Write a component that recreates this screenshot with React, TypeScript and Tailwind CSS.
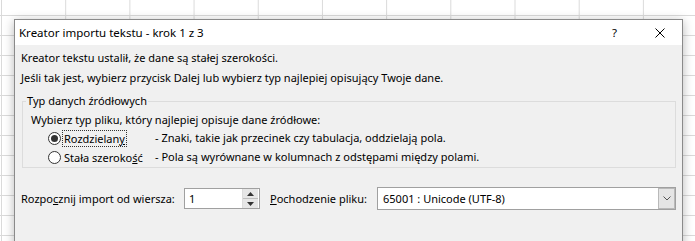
const F = { fontFamily: '"Noto Sans", "Open Sans", sans-serif' };

function Radio({ checked }: { checked?: boolean }) {
  return (
    <span className="w-[13px] h-[13px] rounded-full border border-[#333333] bg-white flex items-center justify-center shrink-0">
      {checked && <span className="w-[7px] h-[7px] rounded-full bg-[#333333]" />}
    </span>
  );
}

export default function App() {
  return (
    <div
      className="w-[695px] h-[241px] overflow-hidden bg-white bg-[linear-gradient(to_right,#dadada_1px,transparent_1px),linear-gradient(to_bottom,#dadada_1px,transparent_1px)] bg-[size:64.2px_20px] bg-[position:1px_15px] pt-[19px] pl-[14px] text-[11px] leading-[16px] text-black whitespace-nowrap"
      style={F}
    >
      <div className="w-[669px] h-[260px] border border-[#8a8a8a] bg-[#f0f0f0] shadow-[0_2px_10px_rgba(0,0,0,0.28)]">
        <div className="h-[25px] bg-white flex items-center">
          <div className="flex-1 pl-[4px] text-[11.5px]">Kreator importu tekstu - krok 1 z 3</div>
          <div className="w-[45px] h-full flex items-center justify-center text-[11.5px]">?</div>
          <div className="w-[45px] h-full flex items-center justify-center">
            <svg width="10" height="10" viewBox="0 0 10 10">
              <path d="M0.5 0.5 L9.5 9.5 M9.5 0.5 L0.5 9.5" stroke="#000" strokeWidth="1" />
            </svg>
          </div>
        </div>
        <div className="pt-[5px] pl-[6px]">
          <div className="h-[16px]">Kreator tekstu ustalił, że dane są stałej szerokości.</div>
          <div className="h-[16px] mt-[4px]">Jeśli tak jest, wybierz przycisk Dalej lub wybierz typ najlepiej opisujący Twoje dane.</div>
        </div>
        <fieldset className="ml-[7px] mt-[7px] w-[654px] border border-[#dcdcdc] pl-[3px] pb-[1px]">
          <legend className="px-[1px] h-[16px] leading-[16px]">Typ danych źródłowych</legend>
          <div className="h-[16px] mt-[3px] pl-[5px]">Wybierz typ pliku, który najlepiej opisuje dane źródłowe:</div>
          <div className="h-[18px] mt-[1px] pl-[22px] flex items-center">
            <div className="w-[107px] flex items-center">
              <Radio checked />
              <span className="ml-[1px] px-[1px] border border-dotted border-[#333333] leading-[15px]">
                Rozdzielan<span className="underline">y</span>
              </span>
            </div>
            <span>- Znaki, takie jak przecinek czy tabulacja, oddzielają pola.</span>
          </div>
          <div className="h-[18px] mt-[1px] pl-[22px] flex items-center">
            <div className="w-[107px] flex items-center">
              <Radio />
              <span className="ml-[1px] px-[1px] border border-transparent leading-[15px]">
                Stała szeroko<span className="underline">ś</span>ć
              </span>
            </div>
            <span>- Pola są wyrównane w kolumnach z odstępami między polami.</span>
          </div>
        </fieldset>
        <div className="mt-[19px] pl-[6px] flex items-center h-[23px]">
          <div className="w-[163px]">
            Rozpo<span className="underline">c</span>znij import od wiersza:
          </div>
          <div className="w-[76px] h-[21px] border border-[#a0a0a0] bg-white flex items-center">
            <span className="flex-1 pl-[4px]">1</span>
            <div className="w-[16px] h-[19px] mr-[1px] flex flex-col border-l border-[#dcdcdc]">
              <div className="flex-1 bg-[#e6e6e6] flex items-center justify-center border-b border-[#bdbdbd]">
                <svg width="7" height="4" viewBox="0 0 7 4"><path d="M3.5 0 L7 4 L0 4 Z" fill="#333" /></svg>
              </div>
              <div className="flex-1 bg-[#e6e6e6] flex items-center justify-center">
                <svg width="7" height="4" viewBox="0 0 7 4"><path d="M0 0 L7 0 L3.5 4 Z" fill="#333" /></svg>
              </div>
            </div>
          </div>
          <div className="w-[117px] pl-[10px]">
            <span className="underline">P</span>ochodzenie pliku:
          </div>
          <div className="w-[299px] h-[23px] border border-[#a0a0a0] bg-white flex items-center">
            <span className="flex-1 pl-[5px]">65001 : Unicode (UTF-8)</span>
            <div className="w-[17px] h-[21px] bg-[#e5e5e5] border border-[#b9b9b9] flex items-center justify-center">
              <svg width="8" height="5" viewBox="0 0 8 5"><path d="M0.5 0.5 L4 4 L7.5 0.5" stroke="#555" strokeWidth="1" fill="none" /></svg>
            </div>
          </div>
        </div>
      </div>
    </div>
  );
}
